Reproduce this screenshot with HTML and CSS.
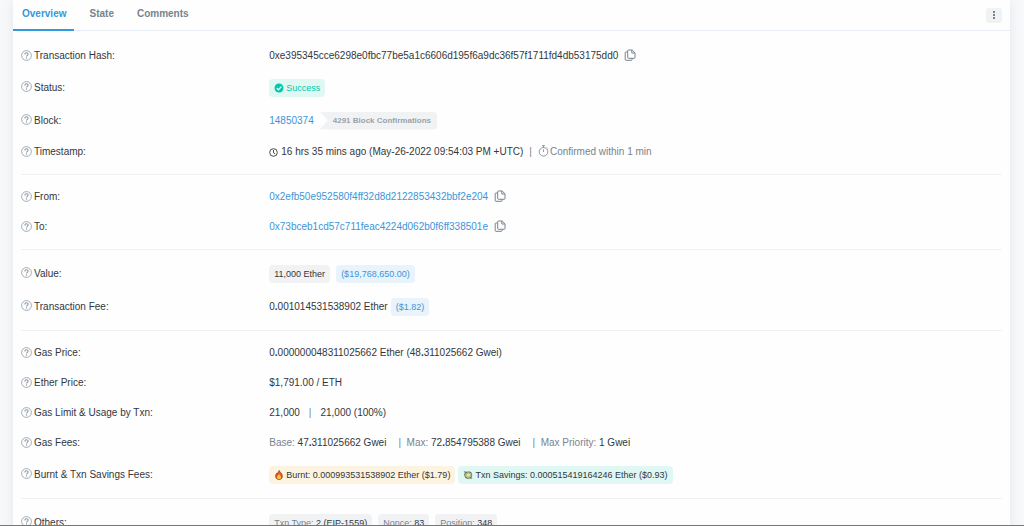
FILE: index.html
```html
<!DOCTYPE html>
<html lang="en">
<head>
    <meta charset="UTF-8">
    <meta name="viewport" content="width=device-width, initial-scale=1.0">
    <title>Transaction Details</title>
    <link rel="stylesheet" href="styles.css">
</head>
<body>
    <!-- Shared icons -->
    <svg class="sprite" aria-hidden="true">
        <symbol id="icon-help" viewBox="0 0 11 11">
            <circle cx="5.5" cy="5.5" r="4.9" fill="none" stroke="currentColor" stroke-width="0.8"/>
            <path d="M3.900 4.400C3.900 3.300 4.600 2.700 5.500 2.700s1.600.6 1.600 1.500c0 1.100-1.600 1.200-1.600 2.300" fill="none" stroke="currentColor" stroke-width="1.100"/>
            <circle cx="5.500" cy="8" r="0.700" fill="currentColor"/>
        </symbol>
        <symbol id="icon-copy" viewBox="0 0 12 12">
            <path d="M4.500 1h3.700l2.800 2.800v4.700a.8.8 0 0 1-.8.8H4.500a.8.8 0 0 1-.8-.8V1.800a.8.8 0 0 1 .8-.8z" fill="none" stroke="currentColor"/>
            <path d="M7.800 1v3h3M3.500 3H2a.8.8 0 0 0-.8.8v6.700a.8.8 0 0 0 .8.8h5.300a.8.8 0 0 0 .8-.8V9.500" fill="none" stroke="currentColor"/>
        </symbol>
        <symbol id="icon-check" viewBox="0 0 10 10">
            <circle cx="5" cy="5" r="4.500" fill="currentColor"/>
            <path d="M2.700 5.100l1.700 1.700 3-3.200" fill="none" stroke="#fff" stroke-width="1.300"/>
        </symbol>
        <symbol id="icon-clock" viewBox="0 0 10 10">
            <circle cx="4.500" cy="5.500" r="3.800" fill="none" stroke="currentColor" stroke-width="0.900"/>
            <path d="M4.500 3v2.800l1.700 1" fill="none" stroke="currentColor" stroke-width="0.900"/>
        </symbol>
        <symbol id="icon-stopwatch" viewBox="0 0 12 12">
            <circle cx="5.500" cy="6.800" r="4.300" fill="none" stroke="currentColor" stroke-width="0.800"/>
            <path d="M4 .6h3M5.500 .6v2M5.500 4.400v2.600M8.800 2.500l.9.9" fill="none" stroke="currentColor" stroke-width="0.800"/>
        </symbol>
        <symbol id="icon-fire" viewBox="0 0 10 12">
            <path d="M5.300.5c.2 1.800 3.800 3.400 3.800 7 0 2.400-1.800 4-4.100 4S.9 9.900.9 7.500c0-1.600.6-2.800 1.400-3.700l.8 1.300C3.600 3.500 4 1.900 5.300.5z" fill="#ee5a1c" stroke="#5e3024" stroke-width="0.700"/>
            <path d="M5.200 4.500c.3 1.600 2.300 2.400 2.300 4.300 0 1.500-1 2.300-2.500 2.300s-2.400-.9-2.400-2.300C2.600 7.100 4.600 6.400 5.200 4.500z" fill="#ffc83d"/>
        </symbol>
        <symbol id="icon-savings" viewBox="0 0 12 12">
            <path d="M1 2.300l3 .2M1.300 5l1.400.3M11 9.800l-2-.3" fill="none" stroke="#48554f"/>
            <ellipse cx="6.300" cy="6.200" rx="4.300" ry="4" fill="#c9d69b" stroke="#505a50" stroke-width="0.900"/>
            <path d="M3 2.500l1.600 1.600M8.300 8.600L9.800 10M3.500 9.700l1.100-1.100M8.500 2l1.300 1.300" fill="none" stroke="#505a50" stroke-width="0.900"/>
            <circle cx="6.600" cy="6" r="2.200" fill="#eff0a4" stroke="#87935c" stroke-width="0.600"/>
        </symbol>
    </svg>

    <main class="card">
        <header class="card-header">
            <nav class="tabs">
                <a class="tab active" href="#overview">Overview</a>
                <a class="tab" href="#state">State</a>
                <a class="tab" href="#comments">Comments</a>
            </nav>
            <button class="menu-btn" type="button" aria-label="More options">
                <svg viewBox="0 0 4 10"><path d="M1 1h2v2H1zM1 4h2v2H1zM1 7h2v2H1z" fill="currentColor"/></svg>
            </button>
        </header>

        <div class="details" id="overview">
            <dl class="group">
                <div class="row">
                    <dt><svg class="icon help"><use href="#icon-help"/></svg>Transaction Hash:</dt>
                    <dd>
                        <span>0xe395345cce6298e0fbc77be5a1c6606d195f6a9dc36f57f1711fd4db53175dd0</span>
                        <button class="copy-btn" type="button" aria-label="Copy hash"><svg class="icon"><use href="#icon-copy"/></svg></button>
                    </dd>
                </div>
                <div class="row row-badge">
                    <dt><svg class="icon help"><use href="#icon-help"/></svg>Status:</dt>
                    <dd><span class="badge badge-success"><svg class="icon-sm"><use href="#icon-check"/></svg>Success</span></dd>
                </div>
                <div class="row row-badge">
                    <dt><svg class="icon help"><use href="#icon-help"/></svg>Block:</dt>
                    <dd>
                        <a href="#block">14850374</a>
                        <span class="confirmations">4291 Block Confirmations</span>
                    </dd>
                </div>
                <div class="row">
                    <dt><svg class="icon help"><use href="#icon-help"/></svg>Timestamp:</dt>
                    <dd class="time">
                        <svg class="icon-sm"><use href="#icon-clock"/></svg>
                        <span>16 hrs 35 mins ago (May-26-2022 09:54:03 PM +UTC)</span>
                        <span class="divider">|</span>
                        <span class="muted confirmed"><svg class="icon"><use href="#icon-stopwatch"/></svg>Confirmed within 1 min</span>
                    </dd>
                </div>
            </dl>

            <dl class="group">
                <div class="row">
                    <dt><svg class="icon help"><use href="#icon-help"/></svg>From:</dt>
                    <dd>
                        <a href="#from">0x2efb50e952580f4ff32d8d2122853432bbf2e204</a>
                        <button class="copy-btn" type="button" aria-label="Copy sender address"><svg class="icon"><use href="#icon-copy"/></svg></button>
                    </dd>
                </div>
                <div class="row">
                    <dt><svg class="icon help"><use href="#icon-help"/></svg>To:</dt>
                    <dd>
                        <a href="#to">0x73bceb1cd57c711feac4224d062b0f6ff338501e</a>
                        <button class="copy-btn" type="button" aria-label="Copy recipient address"><svg class="icon"><use href="#icon-copy"/></svg></button>
                    </dd>
                </div>
            </dl>

            <dl class="group">
                <div class="row row-badge">
                    <dt><svg class="icon help"><use href="#icon-help"/></svg>Value:</dt>
                    <dd>
                        <span class="badge">11,000 Ether</span>
                        <span class="badge badge-usd">($19,768,650.00)</span>
                    </dd>
                </div>
                <div class="row row-badge">
                    <dt><svg class="icon help"><use href="#icon-help"/></svg>Transaction Fee:</dt>
                    <dd class="tight">
                        <span>0<b>.</b>001014531538902 Ether</span>
                        <span class="badge badge-usd">($1.82)</span>
                    </dd>
                </div>
            </dl>

            <dl class="group">
                <div class="row">
                    <dt><svg class="icon help"><use href="#icon-help"/></svg>Gas Price:</dt>
                    <dd><span>0<b>.</b>000000048311025662 Ether (48<b>.</b>311025662 Gwei)</span></dd>
                </div>
                <div class="row">
                    <dt><svg class="icon help"><use href="#icon-help"/></svg>Ether Price:</dt>
                    <dd>$1,791.00 / ETH</dd>
                </div>
                <div class="row">
                    <dt><svg class="icon help"><use href="#icon-help"/></svg>Gas Limit &amp; Usage by Txn:</dt>
                    <dd class="usage"><span>21,000</span><span class="divider">|</span><span>21,000 (100%)</span></dd>
                </div>
                <div class="row">
                    <dt><svg class="icon help"><use href="#icon-help"/></svg>Gas Fees:</dt>
                    <dd class="fees">
                        <span><span class="muted">Base:</span> 47<b>.</b>311025662 Gwei</span>
                        <span><span class="muted">|&nbsp; Max:</span> 72<b>.</b>854795388 Gwei</span>
                        <span><span class="muted">|&nbsp; Max Priority:</span> 1 Gwei</span>
                    </dd>
                </div>
                <div class="row row-badge">
                    <dt><svg class="icon help"><use href="#icon-help"/></svg>Burnt &amp; Txn Savings Fees:</dt>
                    <dd class="tight">
                        <span class="badge badge-burnt"><svg class="icon-sm"><use href="#icon-fire"/></svg>Burnt: 0.000993531538902 Ether ($1.79)</span>
                        <span class="badge badge-saved"><svg class="icon-sm"><use href="#icon-savings"/></svg>Txn Savings: 0.000515419164246 Ether ($0.93)</span>
                    </dd>
                </div>
            </dl>

            <dl class="group">
                <div class="row row-badge">
                    <dt><svg class="icon help"><use href="#icon-help"/></svg>Others:</dt>
                    <dd>
                        <span class="badge"><span><span class="muted">Txn Type:</span> 2 (EIP-1559)</span></span>
                        <span class="badge"><span><span class="muted">Nonce:</span> 83</span></span>
                        <span class="badge"><span><span class="muted">Position:</span> 348</span></span>
                    </dd>
                </div>
            </dl>
        </div>
    </main>
    <div class="bottom-edge"></div>
</body>
</html>
```
FILE: styles.css
```css
* {
    box-sizing: border-box;
}
body {
    margin: 0;
    height: 100vh;
    overflow: hidden;
    font-family: "Liberation Sans", Arial, sans-serif;
    font-size: 10px;
    line-height: 18px;
    color: #33373c;
    background-color: #f8f9fb;
}
a {
    color: #3d95d9;
    text-decoration: none;
}
button {
    border: 0;
    padding: 0;
    background: none;
    font: inherit;
    cursor: pointer;
}
svg {
    display: block;
    flex: none;
}
.sprite {
    position: absolute;
    width: 0;
    height: 0;
}
.card {
    margin: 0 14px 0 13px;
    background-color: #fefefe;
    box-shadow: 0 0 12px rgba(140, 152, 164, 0.2);
}

/* Tabs */
.card-header {
    display: flex;
    justify-content: space-between;
    padding-right: 8px;
    border-bottom: 1px solid #e9edf5;
}
.tabs {
    display: flex;
    gap: 6px;
    margin-bottom: -1px;
}
.tab {
    padding: 5px 8px 6px 9px;
    border-bottom: 2px solid transparent;
    font-weight: bold;
    color: #77838f;
}
.tab.active {
    color: #3498db;
    border-bottom-color: #3498db;
}
.menu-btn {
    display: flex;
    align-items: center;
    justify-content: center;
    align-self: center;
    width: 16px;
    height: 15px;
    border-radius: 3px;
    background-color: #f1f2f4;
    color: #77838f;
}
.menu-btn svg {
    width: 4px;
    height: 10px;
}

/* Detail rows */
.details {
    padding: 10px 8px;
}
.group {
    margin: 0;
}
.group + .group {
    margin-top: 7px;
    padding-top: 7px;
    border-top: 1px solid #eff1f4;
}
.row {
    display: grid;
    grid-template-columns: 1fr 3fr;
    gap: 4px;
    align-items: center;
    min-height: 30px;
}
.row-badge {
    min-height: 33px;
}
dt, dd {
    display: flex;
    align-items: center;
    margin: 0;
    white-space: nowrap;
}
dt {
    gap: 2px;
}
dd {
    gap: 6px;
}
.tight {
    gap: 3px;
}
.time {
    gap: 2px;
}
.time .divider {
    margin: 0 4px;
}
.usage {
    gap: 9px;
}
.fees {
    gap: 12px;
}
.muted, .divider {
    color: #77838f;
}
.confirmed {
    display: flex;
    align-items: center;
}
.icon {
    width: 12px;
    height: 12px;
    margin-bottom: 2px;
}
.icon-sm {
    width: 10px;
    height: 10px;
}
.help {
    width: 11px;
    height: 11px;
    color: #8c98a4;
}
.copy-btn {
    color: #77838f;
}

/* Badges */
.badge {
    display: flex;
    align-items: center;
    gap: 2px;
    padding: 0 5px;
    border-radius: 4px;
    font-size: 9px;
    background-color: #f1f2f4;
}
.badge-success {
    color: #00c9a7;
    background-color: #e0f8f4;
}
.badge-usd {
    color: #3d95d9;
    background-color: #e8f3fb;
}
.badge-burnt {
    background-color: #fcf4e0;
}
.badge-saved {
    background-color: #e0f8f4;
}
.confirmations {
    padding: 0 6px 0 13px;
    border-radius: 0 4px 4px 0;
    font-size: 8px;
    font-weight: bold;
    color: #9aa2ab;
    background-color: #f1f2f4;
    clip-path: polygon(0 0, 100% 0, 100% 100%, 0 100%, 8px 50%);
}

/* Line along the window's bottom edge */
.bottom-edge {
    position: fixed;
    left: 0;
    right: 0;
    bottom: 0;
    height: 1px;
    background-color: #777;
}
```
